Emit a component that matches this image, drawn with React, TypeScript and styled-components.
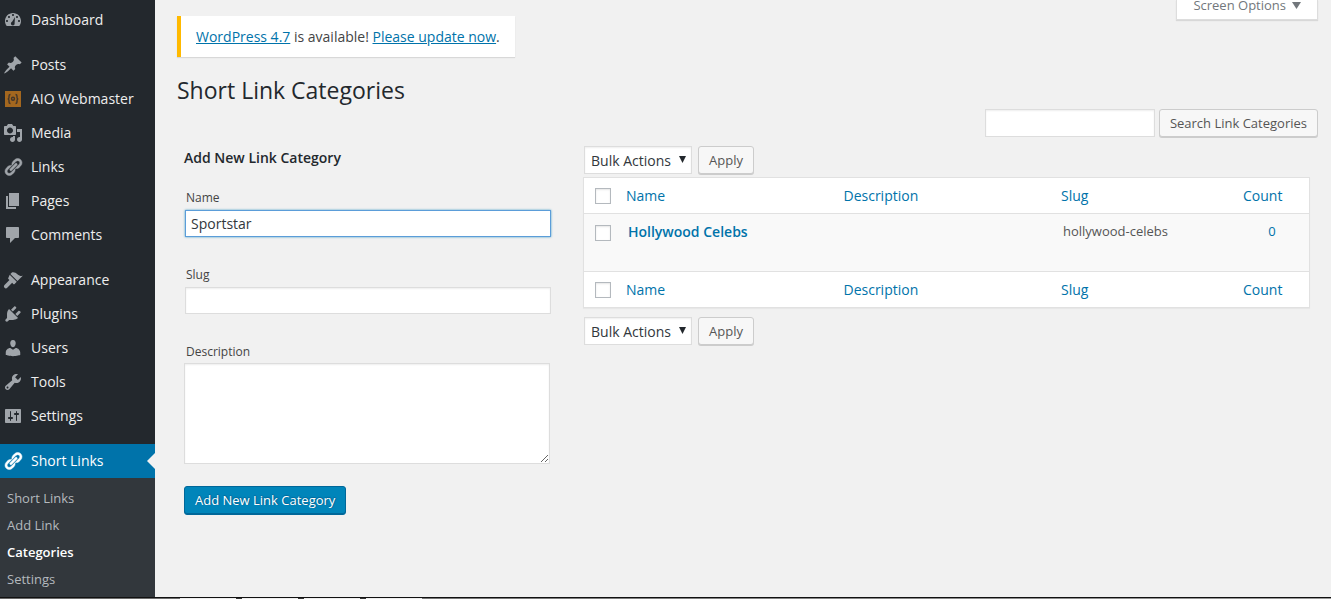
import React from 'react';
import styled, { createGlobalStyle, css } from 'styled-components';

const GlobalStyle = createGlobalStyle`
  *, *::before, *::after { box-sizing: border-box; }
  body {
    margin: 0;
    background: #f1f1f1;
    color: #444;
    font: 14px/20px "Open Sans", sans-serif;
  }
  input, select, textarea, button { font-family: inherit; margin: 0; }
  a { color: #0073aa; }
`;

const Page = styled.div`
  display: flex;
  flex-direction: column;
  min-height: 100vh;
`;

const Body = styled.div`
  display: flex;
  flex: 1;
`;

const Sidebar = styled.nav`
  display: flex;
  flex-direction: column;
  flex: 0 0 155px;
  padding-top: 3px;
  background: #23282d;
`;

const MenuGroup = styled.ul`
  list-style: none;
  margin: 0 0 11px;
  padding: 0;
`;

const MenuLink = styled.a<{ $current?: boolean }>`
  position: relative;
  display: flex;
  align-items: center;
  gap: 8px;
  height: 34px;
  padding-left: 3px;
  color: ${(p) => (p.$current ? '#fff' : '#eee')};
  background: ${(p) => (p.$current ? '#0073aa' : 'transparent')};
  text-decoration: none;
  svg {
    flex: none;
    color: ${(p) => (p.$current ? '#fff' : '#a0a5aa')};
    fill: currentColor;
  }
  ${(p) =>
    p.$current &&
    css`
      &::after {
        content: '';
        position: absolute;
        right: 0;
        top: 9px;
        border: 8px solid transparent;
        border-left-width: 0;
        border-right-color: #f1f1f1;
      }
    `}
`;

const CurrentSection = styled.div`
  flex: 1;
  background: #32373c;
`;

const SubMenu = styled.ul`
  list-style: none;
  margin: 0;
  padding: 7px 0 3px;
`;

const SubLink = styled.a<{ $current?: boolean }>`
  display: block;
  padding-left: 7px;
  font-size: 13px;
  line-height: 27px;
  text-decoration: none;
  color: ${(p) => (p.$current ? '#fff' : '#b4b9be')};
  font-weight: ${(p) => (p.$current ? 600 : 400)};
`;

const Main = styled.main`
  flex: 1;
  min-width: 0;
  padding: 0 13px 24px 22px;
`;

const TopBar = styled.div`
  display: flex;
  justify-content: space-between;
  align-items: flex-start;
`;

const Notice = styled.p`
  margin: 16px 0 0;
  padding: 11px 15px 10px;
  border-left: 4px solid #ffb900;
  background: #fff;
  box-shadow: 0 1px 1px rgba(0, 0, 0, 0.1);
`;

const ScreenOptions = styled.button`
  display: flex;
  align-items: center;
  gap: 6px;
  height: 20px;
  padding: 0 16px 9px;
  border: 1px solid #ddd;
  border-top: 0;
  background: #fff;
  box-shadow: 0 1px 1px rgba(0, 0, 0, 0.1);
  color: #72777c;
  font-size: 13px;
  line-height: 10px;
`;

const Title = styled.h1`
  margin: 17px 0 0;
  color: #23282d;
  font-size: 23px;
  font-weight: 400;
  line-height: 32px;
`;

const fieldStyle = css`
  border: 1px solid #ddd;
  background: #fff;
  color: #32373c;
  font-size: 14px;
  box-shadow: inset 0 1px 2px rgba(0, 0, 0, 0.07);
  outline: none;
`;

const SearchForm = styled.form`
  display: flex;
  justify-content: flex-end;
  gap: 4px;
  margin-top: 3px;
`;

const SearchInput = styled.input`
  ${fieldStyle}
  width: 170px;
  height: 28px;
`;

const Button = styled.button<{ $primary?: boolean }>`
  height: ${(p) => (p.$primary ? 29 : 28)}px;
  padding: 0 10px 1px;
  border: 1px solid ${(p) => (p.$primary ? '#006799' : '#ccc')};
  border-radius: 3px;
  background: ${(p) => (p.$primary ? '#0085ba' : '#f7f7f7')};
  box-shadow: ${(p) => (p.$primary ? 'inset 0 -1px 0 #006799' : '0 1px 0 #ccc')};
  color: ${(p) => (p.$primary ? '#fff' : '#555')};
  font-size: 13px;
  line-height: 26px;
  text-shadow: ${(p) => (p.$primary ? '0 -1px 1px #006799, 1px 0 1px #006799' : 'none')};
`;

const Columns = styled.div`
  display: grid;
  grid-template-columns: 367fr 727fr;
  gap: 32px;
  align-items: start;
  margin-top: 9px;
  padding: 0 8px 0 7px;
`;

const CategoryForm = styled.form`
  display: flex;
  flex-direction: column;
  align-items: flex-start;
`;

const FormTitle = styled.h2`
  margin: 2px 0 20px;
  color: #23282d;
  font-size: 14px;
  font-weight: 600;
  line-height: 20px;
`;

const Field = styled.div`
  display: flex;
  flex-direction: column;
  width: 100%;
  margin-bottom: 22px;
`;

const Label = styled.label`
  padding: 0 2px;
  font-size: 12px;
  line-height: 20px;
  margin-bottom: 1px;
`;

const TextInput = styled.input<{ $active?: boolean }>`
  ${fieldStyle}
  height: 27px;
  margin: 1px 0 6px 1px;
  padding: 2px 5px;
  ${(p) =>
    p.$active &&
    css`
      border-color: #5b9dd9;
      box-shadow: 0 0 2px rgba(30, 140, 190, 0.8);
    `}
`;

const TextArea = styled.textarea`
  ${fieldStyle}
  height: 101px;
  margin-right: 1px;
  padding: 2px 6px;
  resize: vertical;
`;

const ActionBar = styled.div`
  display: flex;
  align-items: center;
  gap: 6px;
  padding-left: 1px;
`;

const SelectBox = styled.div`
  position: relative;
  svg {
    position: absolute;
    right: 6px;
    top: 10px;
    pointer-events: none;
  }
`;

const Select = styled.select`
  ${fieldStyle}
  appearance: none;
  display: block;
  width: 108px;
  height: 28px;
  padding: 0 6px;
  border-radius: 0;
`;

const Table = styled.table`
  width: 100%;
  margin: 3px 0 9px;
  table-layout: fixed;
  border-collapse: separate;
  border-spacing: 0;
  border: 1px solid #e1e1e1;
  background: #fff;
  box-shadow: 0 1px 1px rgba(0, 0, 0, 0.04);
  tbody td {
    height: 57px;
    background: #f9f9f9;
  }
  thead th, thead td { border-bottom: 1px solid #e1e1e1; }
  tfoot th, tfoot td { border-top: 1px solid #e1e1e1; }
`;

const HeadCell = styled.th`
  padding: 8px 8px 7px;
  text-align: left;
  font-weight: 400;
  a { text-decoration: none; }
`;

const Cell = styled.td<{ $center?: boolean }>`
  padding: 8px 10px;
  vertical-align: top;
  font-size: 13px;
  line-height: 18px;
  color: #555;
  text-align: ${(p) => (p.$center ? 'center' : 'left')};
  a { text-decoration: none; }
  strong {
    display: block;
    font-size: 14px;
    font-weight: 600;
    line-height: 20px;
  }
`;

const CheckCell = styled.td<{ $row?: boolean }>`
  padding: ${(p) => (p.$row ? 11 : 10)}px 0 0 11px;
  vertical-align: top;
`;

const Checkbox = styled.input`
  appearance: none;
  display: block;
  width: 16px;
  height: 16px;
  border: 1px solid #b4b9be;
  background: #fff;
  box-shadow: inset 0 1px 2px rgba(0, 0, 0, 0.1);
`;

const BottomEdge = styled.footer`
  height: 2px;
  border-top: 1px solid #111;
  background:
    repeating-linear-gradient(90deg, #eee 0 56px, #333 56px 62px) 180px 0 / 242px 1px no-repeat,
    linear-gradient(90deg, #666, #999);
`;

const icons: Record<string, string> = {
  dashboard:
    'M3.76 16h12.48C17.34 14.63 18 12.89 18 11c0-4.42-3.58-8-8-8s-8 3.58-8 8c0 1.89.66 3.63 1.76 5zM10 4c.55 0 1 .45 1 1s-.45 1-1 1-1-.45-1-1 .45-1 1-1zM6 6c.55 0 1 .45 1 1s-.45 1-1 1-1-.45-1-1 .45-1 1-1zM14 6c.55 0 1 .45 1 1s-.45 1-1 1-1-.45-1-1 .45-1 1-1zM4 10c.55 0 1 .45 1 1s-.45 1-1 1-1-.45-1-1 .45-1 1-1zM16 10c.55 0 1 .45 1 1s-.45 1-1 1-1-.45-1-1 .45-1 1-1zM12 7l-.4 6.1c.3 1.3-.5 2.4-1.7 2.4-1.1 0-2-.9-2-2 0-.8.5-1.5 1.2-1.8z',
  posts:
    'M10.44 3.02l1.82-1.82 6.36 6.35-1.83 1.82c-1.05-.68-2.48-.57-3.41.36l-.75.75c-.92.93-1.04 2.35-.35 3.41l-1.83 1.82-2.41-2.41-2.8 2.79c-.42.42-3.38 2.71-3.8 2.29s1.86-3.39 2.28-3.81l2.79-2.79L4.1 9.36l1.83-1.82c1.05.69 2.48.57 3.4-.36l.75-.75c.93-.92 1.05-2.35.36-3.41z',
  media:
    'M13 11V4c0-.55-.45-1-1-1h-1.67L9 1H5L3.67 3H2c-.55 0-1 .45-1 1v7c0 .55.45 1 1 1h10c.55 0 1-.45 1-1zM7 4.5c1.66 0 3 1.34 3 3s-1.34 3-3 3-3-1.34-3-3 1.34-3 3-3zM14 6h5v10.5c0 1.38-1.12 2.5-2.5 2.5s-2.5-1.12-2.5-2.5 1.12-2.5 2.5-2.5c.17 0 .34.02.5.05V9h-3V6zM10 14.05V13h2v3.5c0 1.38-1.12 2.5-2.5 2.5S7 17.88 7 16.5 8.12 14 9.5 14c.17 0 .34.02.5.05z',
  links:
    'M17.74 2.76c1.68 1.69 1.68 4.41 0 6.1l-1.53 1.52c-1.12 1.12-2.7 1.47-4.14 1.09l2.62-2.61.76-.77.76-.76c.84-.84.84-2.2 0-3.04-.84-.85-2.2-.85-3.04 0l-.77.76-3.38 3.38c-.37-1.44-.02-3.02 1.1-4.14l1.52-1.53c1.69-1.68 4.42-1.68 6.1 0zM8.59 13.43l5.34-5.34c.42-.42.42-1.1 0-1.52-.44-.43-1.13-.39-1.53 0l-5.33 5.34c-.42.42-.42 1.1 0 1.52.44.43 1.13.39 1.52 0zM7.83 15.72l4.14-4.15c.38 1.44.03 3.02-1.09 4.14l-1.52 1.53c-1.69 1.68-4.41 1.68-6.1 0-1.68-1.68-1.68-4.42 0-6.1l1.53-1.52c1.12-1.12 2.7-1.47 4.14-1.1l-4.14 4.15c-.85.84-.85 2.2 0 3.05.84.84 2.2.84 3.04 0z',
  pages: 'M6 15V2h10v13H6zM5 16h8v2H3V5h2v11z',
  comments: 'M4 2h11c.55 0 1 .45 1 1v9c0 .55-.45 1-1 1h-3l-5 5v-5H4c-.55 0-1-.45-1-1V3c0-.55.45-1 1-1z',
  appearance:
    'M14.48 11.06L7.41 4l1.5-1.5c.5-.56 2.3-.47 3.51.32 1.21.8 1.43 1.28 2.91 2.1 1.18.64 2.45 1.26 4.45.85zM6.71 4.7l7.07 7.06-2.13 2.13c-.4.4-1.03.4-1.42 0l-1.06-1.06-4.94 4.96c-.8.79-1.91.78-2.71-.02s-.8-1.91-.02-2.71l4.95-4.95-1.06-1.06c-.39-.39-.39-1.02 0-1.41z',
  plugins:
    'M13.11 4.36L9.87 7.6 8 5.73l3.24-3.24c.35-.34 1.05-.2 1.56.32.52.51.66 1.21.31 1.55zM5.11 6.13l.91-1.12 9.01 9.01-1.19.84c-.71.71-2.63 1.16-3.82 1.16H6.14L4.9 17.26c-.59.59-1.54.59-2.12 0-.59-.58-.59-1.53 0-2.12l1.24-1.24v-3.88c0-1.13.4-3.19 1.09-3.89zM12.37 10.1l3.24-3.24c.34-.35 1.04-.21 1.55.31.52.51.66 1.21.31 1.55l-3.24 3.25z',
  users:
    'M10 9.25c-2.27 0-2.73-3.44-2.73-3.44C7 4.02 7.82 2 9.97 2c2.16 0 2.98 2.02 2.71 3.81 0 0-.41 3.44-2.68 3.44zM10 11.82L12.72 10c2.39 0 4.52 2.33 4.52 4.53v2.49s-3.65 1.13-7.24 1.13c-3.65 0-7.24-1.13-7.24-1.13v-2.49c0-2.25 1.94-4.48 4.47-4.48z',
  tools:
    'M16.68 9.77c-1.34 1.34-3.3 1.67-4.95.99l-5.41 6.52c-.99.99-2.59.99-3.58 0s-.99-2.59 0-3.57l6.52-5.42c-.68-1.65-.35-3.61.99-4.95 1.28-1.28 3.12-1.62 4.72-1.06l-2.89 2.89 2.82 2.82 2.86-2.87c.53 1.58.18 3.39-1.08 4.65zM3.81 16.21c.4.39 1.04.39 1.43 0 .4-.4.4-1.04 0-1.43-.39-.4-1.03-.4-1.43 0-.39.39-.39 1.03 0 1.43z',
  settings:
    'M18 16V4c0-.55-.45-1-1-1H3c-.55 0-1 .45-1 1v12c0 .55.45 1 1 1h14c.55 0 1-.45 1-1zM8 11h1c.55 0 1 .45 1 1s-.45 1-1 1H8v1.5c0 .28-.22.5-.5.5s-.5-.22-.5-.5V13H6c-.55 0-1-.45-1-1s.45-1 1-1h1V5.5c0-.28.22-.5.5-.5s.5.22.5.5V11zM13 9h-1c-.55 0-1-.45-1-1s.45-1 1-1h1V5.5c0-.28.22-.5.5-.5s.5.22.5.5V7h1c.55 0 1 .45 1 1s-.45 1-1 1h-1v5.5c0 .28-.22.5-.5.5s-.5-.22-.5-.5V9z',
};

function MenuIcon({ name }: { name: string }) {
  if (name === 'webmaster') {
    return (
      <svg width="20" height="20" viewBox="0 0 20 20" aria-hidden="true">
        <rect x="2" y="2" width="16" height="16" fill="#a3671f" />
        <g fill="none" stroke="#43362a" strokeWidth="1.4">
          <path d="M7.5 5.5q-1.5 0-1.5 1.5v1.5q0 1.5-1.3 1.5 1.3 0 1.3 1.5v1.5q0 1.5 1.5 1.5M12.5 5.5q1.5 0 1.5 1.5v1.5q0 1.5 1.3 1.5-1.3 0-1.3 1.5v1.5q0 1.5-1.5 1.5" />
          <circle cx="10" cy="9.800" r="1.5" />
        </g>
      </svg>
    );
  }
  return (
    <svg width="20" height="20" viewBox="0 0 20 20" fillRule="evenodd" aria-hidden="true">
      <path d={icons[name]} stroke={name === 'links' ? 'currentColor' : 'none'} strokeWidth="0.5" />
    </svg>
  );
}

const menu: [string, string][][] = [
  [['dashboard', 'Dashboard']],
  [
    ['posts', 'Posts'],
    ['webmaster', 'AIO Webmaster'],
    ['media', 'Media'],
    ['links', 'Links'],
    ['pages', 'Pages'],
    ['comments', 'Comments'],
  ],
  [
    ['appearance', 'Appearance'],
    ['plugins', 'Plugins'],
    ['users', 'Users'],
    ['tools', 'Tools'],
    ['settings', 'Settings'],
  ],
];

function BulkActions({ id }: { id: string }) {
  return (
    <ActionBar>
      <SelectBox>
        <Select id={id} aria-label="Select bulk action">
          <option>Bulk Actions</option>
        </Select>
        <svg width="7" height="7" viewBox="0 0 7 7" aria-hidden="true">
          <path d="M0 0h7L3.5 7z" fill="#23282d" />
        </svg>
      </SelectBox>
      <Button type="button">Apply</Button>
    </ActionBar>
  );
}

function ColumnHeads() {
  return (
    <tr>
      <CheckCell>
        <Checkbox type="checkbox" aria-label="Select all" />
      </CheckCell>
      {['Name', 'Description', 'Slug', 'Count'].map((name) => (
        <HeadCell key={name} scope="col">
          <a href="#sort">{name}</a>
        </HeadCell>
      ))}
    </tr>
  );
}

const CheckColumn = styled.col`
  width: 34px;
`;

const WideColumn = styled.col`
  width: 30%;
`;

const CountColumn = styled.col`
  width: 74px;
`;

export default function App() {
  return (
    <Page>
      <GlobalStyle />
      <Body>
        <Sidebar>
          {menu.map((group) => (
            <MenuGroup key={group[0][0]}>
              {group.map(([icon, label]) => (
                <li key={icon}>
                  <MenuLink href={`#${icon}`}>
                    <MenuIcon name={icon} />
                    {label}
                  </MenuLink>
                </li>
              ))}
            </MenuGroup>
          ))}
          <CurrentSection>
            <MenuLink href="#short-links" $current>
              <MenuIcon name="links" />
              Short Links
            </MenuLink>
            <SubMenu>
              {['Short Links', 'Add Link', 'Categories', 'Settings'].map((label) => (
                <li key={label}>
                  <SubLink href="#short-links" $current={label === 'Categories'}>
                    {label}
                  </SubLink>
                </li>
              ))}
            </SubMenu>
          </CurrentSection>
        </Sidebar>
        <Main>
          <TopBar>
            <Notice>
              <a href="#release">WordPress 4.7</a> is available! <a href="#update">Please update now</a>.
            </Notice>
            <ScreenOptions type="button">
              Screen Options
              <svg width="9" height="7" viewBox="0 0 9 7" aria-hidden="true">
                <path d="M0 0h9L4.5 7z" fill="#72777c" />
              </svg>
            </ScreenOptions>
          </TopBar>
          <Title>Short Link Categories</Title>
          <SearchForm>
            <SearchInput type="search" aria-label="Search Link Categories" />
            <Button type="button">Search Link Categories</Button>
          </SearchForm>
          <Columns>
            <CategoryForm>
              <FormTitle>Add New Link Category</FormTitle>
              <Field>
                <Label htmlFor="name">Name</Label>
                <TextInput id="name" defaultValue="Sportstar" $active />
              </Field>
              <Field>
                <Label htmlFor="slug">Slug</Label>
                <TextInput id="slug" />
              </Field>
              <Field>
                <Label htmlFor="description">Description</Label>
                <TextArea id="description" />
              </Field>
              <Button type="button" $primary>
                Add New Link Category
              </Button>
            </CategoryForm>
            <div>
              <BulkActions id="bulk-top" />
              <Table>
                <colgroup>
                  <CheckColumn />
                  <WideColumn />
                  <WideColumn />
                  <col />
                  <CountColumn />
                </colgroup>
                <thead>
                  <ColumnHeads />
                </thead>
                <tbody>
                  <tr>
                    <CheckCell $row>
                      <Checkbox type="checkbox" aria-label="Select Hollywood Celebs" />
                    </CheckCell>
                    <Cell>
                      <strong>
                        <a href="#hollywood-celebs">Hollywood Celebs</a>
                      </strong>
                    </Cell>
                    <Cell />
                    <Cell>hollywood-celebs</Cell>
                    <Cell $center>
                      <a href="#count">0</a>
                    </Cell>
                  </tr>
                </tbody>
                <tfoot>
                  <ColumnHeads />
                </tfoot>
              </Table>
              <BulkActions id="bulk-bottom" />
            </div>
          </Columns>
        </Main>
      </Body>
      <BottomEdge />
    </Page>
  );
}
